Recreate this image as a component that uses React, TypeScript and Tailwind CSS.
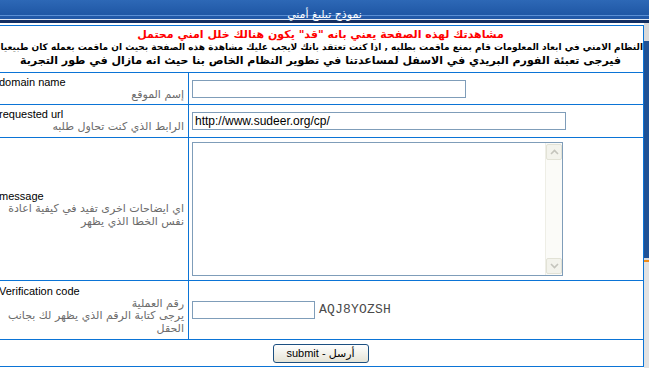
const arabic = "font-['Tahoma','DejaVu_Sans',sans-serif]";
const latin = "font-['Liberation_Sans',Arial,sans-serif]";

type Row = {
  en: string;
  ar: string[];
  height: string;
  field: React.ReactNode;
};

function TextInput({ width, value }: { width: string; value?: string }) {
  return (
    <input
      type="text"
      defaultValue={value}
      className={`${width} h-[18px] border border-[#7f9db9] bg-white px-[2px] text-[12px] leading-[16px] text-black outline-none ${latin}`}
    />
  );
}

function Chevron({ up }: { up?: boolean }) {
  return (
    <svg width="9" height="6" viewBox="0 0 9 6" className="block">
      <path
        d={up ? "M1 5 L4.5 1.5 L8 5" : "M1 1 L4.5 4.5 L8 1"}
        fill="none"
        stroke="#c4c4bc"
        strokeWidth="1.6"
      />
    </svg>
  );
}

function MessageBox() {
  return (
    <div className="flex h-[134px] w-[371px] border border-[#7f9db9] bg-white">
      <textarea className="h-full flex-1 resize-none border-0 bg-white p-[2px] text-[12px] outline-none" />
      <div className="flex w-[17px] flex-col justify-between border-l border-[#eeeee6] bg-[#fbfbf8] py-[1px]">
        <div className="flex h-[16px] items-center justify-center rounded-[2px] border border-[#e2e2d6] bg-[#f3f3ec]">
          <Chevron up />
        </div>
        <div className="flex h-[16px] items-center justify-center rounded-[2px] border border-[#e2e2d6] bg-[#f3f3ec]">
          <Chevron />
        </div>
      </div>
    </div>
  );
}

const rows: Row[] = [
  {
    en: "domain name",
    ar: ["إسم الموقع"],
    height: "h-[32px]",
    field: <TextInput width="w-[274px]" />,
  },
  {
    en: "requested url",
    ar: ["الرابط الذي كنت تحاول طلبه"],
    height: "h-[33px]",
    field: <TextInput width="w-[374px]" value="http://www.sudeer.org/cp/" />,
  },
  {
    en: "message",
    ar: ["اي ايضاحات اخرى تفيد في كيفية اعادة", "نفس الخطا الذي يظهر"],
    height: "h-[143px]",
    field: <MessageBox />,
  },
  {
    en: "Verification code",
    ar: ["رقم العملية", "يرجى كتابة الرقم الذي يظهر لك بجانب", "الحقل"],
    height: "h-[59px]",
    field: (
      <div className="flex items-center gap-[4px]">
        <TextInput width="w-[123px]" />
        <span className="font-['Liberation_Mono',monospace] text-[13px] tracking-[0.2px] text-[#4a4a4a]">
          AQJ8YOZSH
        </span>
      </div>
    ),
  },
];

export default function App() {
  return (
    <div className="flex h-[368px] w-[649px] flex-col overflow-hidden bg-white">
      {/* title bar */}
      <div className="flex h-[23px] shrink-0 flex-col">
        <div className="h-[15px] bg-gradient-to-b from-[#2d68b6] to-[#1f57a5]" />
        <div className="h-[1px] bg-[#5a8fd4]" />
        <div className="relative h-[3px] bg-[#2259a8]">
          <div
            dir="rtl"
            className={`absolute inset-x-0 top-[-7px] text-center text-[11px] leading-[11px] text-white ${arabic}`}
          >
            نموذج تبليغ أمني
          </div>
        </div>
        <div className="h-[1px] bg-[#dfe8f4]" />
        <div className="h-[3px] bg-[#132f62]" />
      </div>

      <div className="flex flex-1">
        <div className="flex-1 overflow-hidden pt-[2px]">
          <div className="ml-[-3px] w-[647px] border-x border-t border-[#0b74d6]">
            <div
              dir="rtl"
              className={`h-[46px] pt-[2px] text-center text-[11px] font-bold leading-[13px] whitespace-nowrap ${arabic}`}
            >
              <div className="text-[#ff0000]">
                مشاهدتك لهذه الصفحة يعني بانه "قد" يكون هنالك خلل امني محتمل
              </div>
              <div className="pl-[3px] text-[9px] text-black">
                النظام الامني في ابعاد المعلومات قام بمنع ماقمت بطلبه , اذا كنت تعتقد بانك لايجب عليك مشاهدة هذه الصفحة بحيث ان ماقمت بعمله كان طبيعيا
              </div>
              <div className="text-black">
                فيرجى تعبئة الفورم البريدي في الاسفل لمساعدتنا في تطوير النظام الخاص بنا حيث انه مازال في طور التجربة
              </div>
            </div>

            {rows.map((row) => (
              <div key={row.en} className={`flex border-t border-[#0b74d6] ${row.height}`}>
                <div className="flex w-[191px] shrink-0 flex-col justify-center border-r border-[#0b74d6] pl-[1px] pr-[4px]">
                  <div className={`text-[11px] leading-[13px] text-black ${latin}`}>{row.en}</div>
                  <div dir="rtl" className={`text-right text-[11px] leading-[12.5px] text-[#6b6b6b] ${arabic}`}>
                    {row.ar.map((line) => (
                      <div key={line}>{line}</div>
                    ))}
                  </div>
                </div>
                <div className="flex flex-1 items-center pl-[3px]">{row.field}</div>
              </div>
            ))}

            <div className="flex h-[28px] items-center justify-center border-y border-[#0b74d6]">
              <button
                type="button"
                className={`h-[19px] w-[96px] rounded-[3px] border border-[#1c4f80] bg-gradient-to-b from-white to-[#e6e4d6] text-[11px] leading-[15px] text-black ${latin}`}
              >
                submit - <span className={arabic}>أرسل</span>
              </button>
            </div>
          </div>
        </div>

        {/* edge of the outer frame */}
        <div className="flex w-[5px] shrink-0 flex-col">
          <div className="h-[18px] bg-[#d9d9d9]" />
          <div className="h-[217px] bg-[#1f5296]" />
          <div className="h-[2px] bg-[#dcdcdc]" />
          <div className="h-[2px] bg-[#f08c18]" />
          <div className="flex-1 bg-[#e2e2e2]" />
        </div>
      </div>
    </div>
  );
}
